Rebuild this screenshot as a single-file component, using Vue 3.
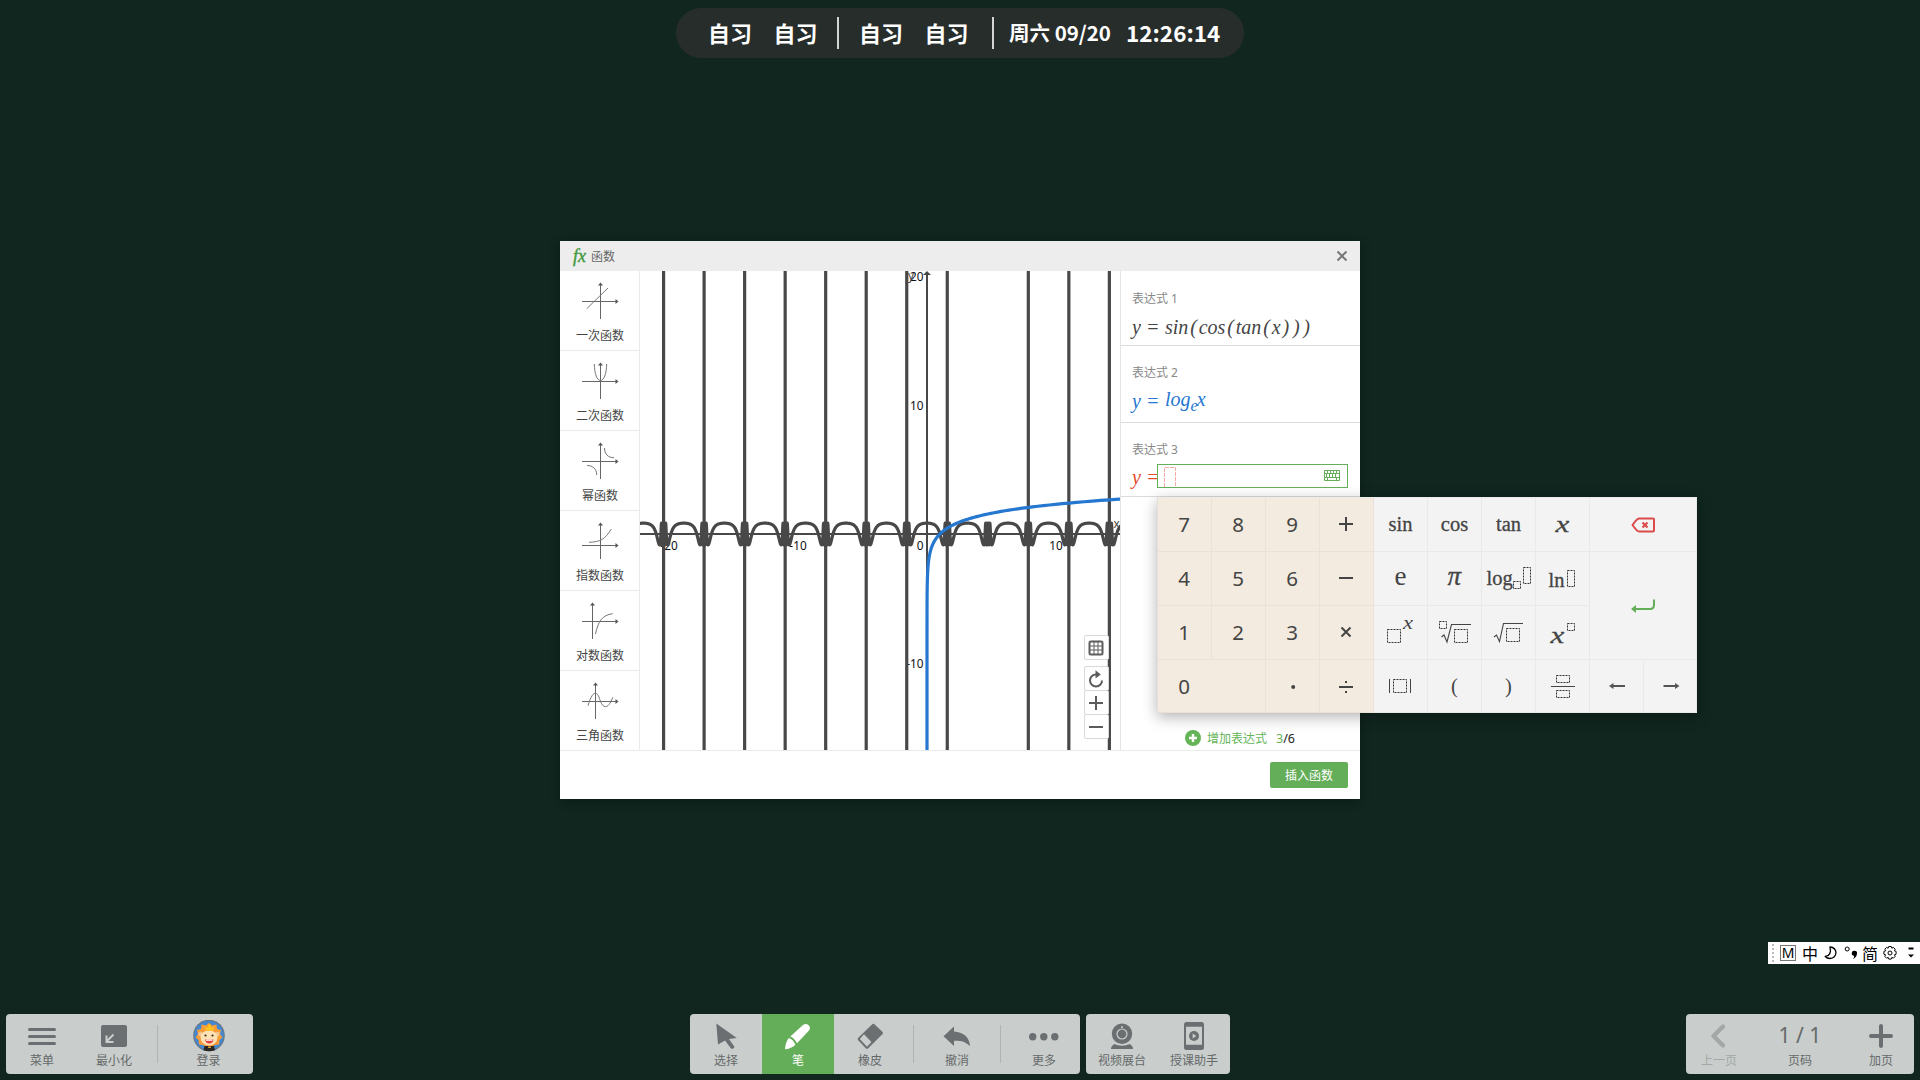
<script setup>
const U = 12.9
const OX = 287
const OY = 263

const asymptotes = []
for (let k = -7; k <= 4; k++) {
  if (k === 1) continue
  asymptotes.push(+(OX + U * (Math.PI / 2 + k * Math.PI)).toFixed(2))
}

function trigPath() {
  const pts = []
  for (let px = -2; px <= 482; px += 0.06) {
    const x = (px - OX) / U
    const y = Math.sin(Math.cos(Math.tan(x)))
    pts.push(`${px.toFixed(2)} ${(OY - y * U).toFixed(2)}`)
  }
  return 'M' + pts.join('L')
}

function logPath() {
  const pts = []
  for (let y = -17; y <= 2.8; y += 0.05) {
    pts.push(`${(OX + Math.exp(y) * U).toFixed(2)} ${(OY - y * U).toFixed(2)}`)
  }
  return 'M' + pts.join('L')
}

const trig = trigPath()
const log = logPath()

const kinds = [
  { name: '一次函数', ax: 18.5, ay: 18.5, d: 'M4.7 25.7L26 5' },
  { name: '二次函数', ax: 18.5, ay: 18.5, d: 'M12.3 1C12.6 11 15 17.5 18.5 17.5S24.4 11 24.7 1' },
  { name: '幂函数', ax: 18.5, ay: 18.5, d: 'M22.5 5C22.5 11 26 14.7 32 14.7M5 22.5C11 22.5 14.7 26 14.7 32' },
  { name: '指数函数', ax: 18.5, ay: 22.5, d: 'M7 19.3C18 19 23 16.5 29.3 6' },
  { name: '对数函数', ax: 10.5, ay: 18.5, d: 'M13.5 31C16 19 20 12 30.7 10.7' },
  { name: '三角函数', ax: 13.5, ay: 18.5, d: 'M6 22.7C9 13 11 10.3 13.5 10.3S17 14 18.5 18.5C20 22 21.5 23.7 23.5 23.7S28.5 21 30.7 14.3' }
]

const keys = [
  { t: '7', c: 'num' }, { t: '8', c: 'num' }, { t: '9', c: 'num' }, { g: 'plus', c: 'num' },
  { s: 'sin' }, { s: 'cos' }, { s: 'tan' }, { g: 'x' }, { g: 'back', c: 'wide' },
  { t: '4', c: 'num' }, { t: '5', c: 'num' }, { t: '6', c: 'num' }, { g: 'minus', c: 'num' },
  { g: 'e' }, { g: 'pi' }, { g: 'log' }, { g: 'ln' }, { g: 'enter', c: 'wide tall' },
  { t: '1', c: 'num' }, { t: '2', c: 'num' }, { t: '3', c: 'num' }, { g: 'times', c: 'num' },
  { g: 'powx' }, { g: 'nroot' }, { g: 'sqrt' }, { g: 'xpow' },
  { t: '0', c: 'num wide zero' }, { g: 'dot', c: 'num' }, { g: 'div', c: 'num' },
  { g: 'abs' }, { s: '(' }, { s: ')' }, { g: 'frac' }, { g: 'left' }, { g: 'right' }
]
</script>

<template>
  <div class="desktop">
    <header class="schedule">
      <span class="lesson">自习</span><span class="lesson">自习</span>
      <i class="bar"></i>
      <span class="lesson">自习</span><span class="lesson">自习</span>
      <i class="bar"></i>
      <span class="date">周六 09/20</span><span class="clock">12:26:14</span>
    </header>

    <section class="window">
      <div class="titlebar">
        <span class="fx">fx</span><span class="title">函数</span>
        <svg class="close" width="12" height="12"><path d="M1.5 1.5l9 9M10.5 1.5l-9 9" stroke="#777" stroke-width="2" /></svg>
      </div>
      <div class="body">
        <nav class="kinds">
          <div v-for="k in kinds" :key="k.name" class="kind">
            <svg width="37" height="37" fill="none">
              <g stroke="#666" stroke-width="1">
                <path :d="`M0 ${k.ay}H36M${k.ax} 0V36`" />
                <path :d="k.d" stroke="#777" />
              </g>
              <path :d="`M${k.ax} -.5l2.500 3h-5zM36.5 ${k.ay}l-3 2.500v-5z`" fill="#555" />
            </svg>
            <span>{{ k.name }}</span>
          </div>
        </nav>

        <div class="graph">
          <svg width="480" height="479" fill="none">
            <g class="ticks">
              <text x="29" y="279" text-anchor="middle">-20</text>
              <text x="158" y="279" text-anchor="middle">-10</text>
              <text x="416" y="279" text-anchor="middle">10</text>
              <text x="283.5" y="279" text-anchor="end">0</text>
              <text x="283.5" y="10" text-anchor="end">20</text>
              <text x="283.5" y="139" text-anchor="end">10</text>
              <text x="283.5" y="397" text-anchor="end">-10</text>
              <text x="268" y="9" class="axis">y</text>
              <text x="473.5" y="257" class="axis">x</text>
            </g>
            <path d="M0 263H480M287 2V479" stroke="#484848" stroke-width="2" />
            <path d="M287 0l4 4h-8z" fill="#484848" />
            <path v-for="a in asymptotes" :key="a" :d="`M${a} 0V479`" stroke="#484848" stroke-width="3.2" />
            <path :d="trig" stroke="#484848" stroke-width="3.200" stroke-linejoin="round" />
            <path :d="log" stroke="#2577d0" stroke-width="3.200" stroke-linejoin="round" />
          </svg>
          <div class="tools">
            <button>
              <svg width="16" height="16" fill="none" stroke="#5c5c5c">
                <rect x="1.5" y="1.5" width="13" height="13" rx="1.5" stroke-width="2" />
                <path d="M6 2v12M10 2v12M2 6h12M2 10h12" />
              </svg>
            </button>
            <div class="stack">
              <button>
                <svg width="16" height="18" fill="none">
                  <path d="M8 4.5A6 6 0 1 0 14 10.5" stroke="#5c5c5c" stroke-width="2" />
                  <path d="M7.5 .3L12.8 4.5L7.5 8.5z" fill="#5c5c5c" />
                </svg>
              </button>
              <button>
                <svg width="16" height="16" stroke="#5c5c5c" stroke-width="2"><path d="M1 8h14M8 1v14" /></svg>
              </button>
              <button>
                <svg width="16" height="16" stroke="#5c5c5c" stroke-width="2"><path d="M1 8h14" /></svg>
              </button>
            </div>
          </div>
        </div>

        <aside class="exprs">
          <div class="expr e1">
            <label>表达式 1</label>
            <div class="formula">
              <span class="lhs">y&nbsp;=</span>
              <span>sin</span><b>(</b><span>cos</span><b>(</b><span>tan</span><b>(</b><span>x</span><b>)</b><b>)</b><b>)</b>
            </div>
          </div>
          <div class="expr e2">
            <label>表达式 2</label>
            <div class="formula"><span class="lhs">y&nbsp;=</span><span class="log">log<sub>e</sub>x</span></div>
          </div>
          <div class="expr e3">
            <label>表达式 3</label>
            <div class="formula">
              <span class="lhs">y&nbsp;=</span>
              <div class="input">
                <svg class="slot" width="12" height="20" fill="none" stroke="#f3aaa4">
                  <path d="M.5 20V.5H11.5V20" stroke-dasharray="4 1" />
                </svg>
                <svg class="kbd" width="16" height="12" fill="none" stroke="#65ae59">
                  <path d="M.5 .5h15v10H.5zM.5 3.500h15M.5 7.500h15M3.500 .5v3M6.500 .5v3M9.500 .5v3M12.500 .5v3M2.500 3.500v4M5.500 3.500v4M8.500 3.500v4M11.500 3.500v4M3.500 7.500v3M12.500 7.500v3" />
                </svg>
              </div>
            </div>
          </div>
          <div class="add">
            <svg width="16" height="16"><circle cx="8" cy="8" r="8" fill="#65b558" /><path d="M4 8h8M8 4v8" stroke="#fff" stroke-width="2.4" /></svg>
            <span class="addtext">增加表达式</span><span class="count"><em>3</em>/6</span>
          </div>
        </aside>
      </div>
      <div class="footer"><button class="insert">插入函数</button></div>
    </section>

    <section class="keypad">
      <div v-for="(k, i) in keys" :key="i" class="key" :class="k.c">
        <span v-if="k.t" class="digit">{{ k.t }}</span>
        <span v-else-if="k.s" class="fn" :class="{ paren: k.s.length === 1 }">{{ k.s }}</span>
        <svg v-else :width="k.c && k.c.includes('wide') ? 107 : 53" :height="k.c && k.c.includes('tall') ? 107 : 53" fill="none" stroke="#444" class="glyph">
          <path v-if="k.g === 'plus'" d="M19 26h14M26 19v14" stroke-width="2" />
          <path v-else-if="k.g === 'minus'" d="M19 26h14" stroke-width="2" />
          <path v-else-if="k.g === 'times'" d="M21.5 21.5l9 9M30.5 21.5l-9 9" stroke-width="2" />
          <path v-else-if="k.g === 'div'" d="M19 27h14M25 22h2M25 32h2" stroke-width="2" />
          <circle v-else-if="k.g === 'dot'" cx="27.2" cy="27" r="2" fill="#444" stroke="none" />
          <text v-else-if="k.g === 'x'" transform="translate(19.5 34) scale(1.300 1)" font-size="24" class="it">x</text>
          <text v-else-if="k.g === 'e'" x="20.5" y="33" font-size="27" class="thin">e</text>
          <text v-else-if="k.g === 'pi'" x="19.5" y="33" font-size="27" class="it">π</text>
          <g v-else-if="k.g === 'log'">
            <text x="4.5" y="32.5" font-size="20.500">log</text>
            <path class="box" d="M31.5 29.5h7v7h-7zM41.5 15.5h7v16h-7z" />
          </g>
          <g v-else-if="k.g === 'ln'">
            <text x="12.5" y="35" font-size="20.500">ln</text>
            <path class="box" d="M31.5 18.5h7v16h-7z" />
          </g>
          <g v-else-if="k.g === 'powx'">
            <text transform="translate(29 22.5) scale(1.250 1)" font-size="18" class="it thin">x</text>
            <path class="box" d="M13.5 23.5h13v13h-13z" />
          </g>
          <g v-else-if="k.g === 'nroot'">
            <path d="M13.5 31l2.5-2l3 7l4.500-17.500h19.500" stroke-width="1.100" />
            <path class="box" d="M11.5 15.5h7v7h-7zM26.5 23.5h13v13h-13z" />
          </g>
          <g v-else-if="k.g === 'sqrt'">
            <path d="M12 31l2.500-2l3 6.500l4-18h19.500" stroke-width="1.100" />
            <path class="box" d="M24.5 22.5h13v13h-13z" />
          </g>
          <g v-else-if="k.g === 'xpow'">
            <text transform="translate(14.5 36.5) scale(1.300 1)" font-size="24" class="it">x</text>
            <path class="box" d="M31.5 17.5h7v7h-7z" />
          </g>
          <g v-else-if="k.g === 'abs'">
            <path d="M15.5 19v14M36.5 19v14" />
            <path class="box" d="M19.5 19.5h13v13h-13z" />
          </g>
          <g v-else-if="k.g === 'frac'">
            <path d="M15 26.5h24" />
            <path class="box" d="M20.5 15.5h13v7h-13zM20.5 30.5h13v7h-13z" />
          </g>
          <g v-else-if="k.g === 'back'" stroke="#dc4a4a">
            <path d="M49 20.5H63Q64 20.5 64 21.5V32.5Q64 33.5 63 33.5H49Q47 33.5 42.5 27Q47 20.5 49 20.5z" stroke-width="2" stroke-linejoin="round" />
            <path d="M52.5 24.5l5 5M57.5 24.5l-5 5" stroke-width="2.200" />
          </g>
          <g v-else-if="k.g === 'enter'" stroke="#65ae59">
            <path d="M64 47.5V53Q64 57 60 57H44" stroke-width="2" />
            <path d="M41 57l5-4v8z" fill="#65ae59" stroke="none" />
          </g>
          <g v-else-if="k.g === 'left'">
            <path d="M22 26H35" stroke="#555" stroke-width="2" /><path d="M19 26l4.500-3v6z" fill="#555" stroke="none" />
          </g>
          <g v-else-if="k.g === 'right'">
            <path d="M19.5 26H32" stroke="#555" stroke-width="2" /><path d="M35.5 26l-4.500-3v6z" fill="#555" stroke="none" />
          </g>
        </svg>
      </div>
    </section>

    <section class="ime">
      <svg width="5" height="20" class="grip"><path d="M2 1v19" stroke="#bbb" stroke-width="2" stroke-dasharray="2 2" /></svg>
      <span class="m">M</span>
      <span class="zh">中</span>
      <svg width="14" height="14" fill="none" stroke="#000" stroke-width="1.3"><path d="M6 1Q11.5 1.5 12 6.5Q11.5 12 6 12.5Q3 12.5 1.2 10.5Q8 9.5 6 1z" stroke-linejoin="round" /></svg>
      <svg width="14" height="14"><circle cx="3.2" cy="3" r="2" fill="none" stroke="#000" /><path d="M10.5 4.8a2.500 2.500 0 0 1 2.500 2.800Q12.800 11.500 9 13Q10.800 10.800 10 9.800A2.500 2.500 0 0 1 10.500 4.800z" /></svg>
      <span class="zh jian">简</span>
      <svg width="16" height="16" fill="none" stroke="#000">
        <circle cx="8" cy="8" r="2" />
        <path d="M6.8 1.5h2.400l.6 1.700 1.600-.8 1.800 1.800-.8 1.600 1.700.6v2.800l-1.700.6.8 1.600-1.800 1.800-1.600-.8-.6 1.700H6.800l-.6-1.700-1.600.8-1.800-1.800.8-1.600-1.700-.6V6.400l1.700-.6-.8-1.600 1.800-1.800 1.600.8z" stroke-linejoin="round" />
      </svg>
      <svg width="8" height="12" class="opts"><path d="M1.5 1.5h5" stroke="#000" stroke-width="2" /><path d="M1 7.5h6l-3 3z" /></svg>
    </section>

    <footer class="dock left">
      <div class="item">
        <svg width="32" height="32" stroke="#6b6f71" stroke-width="3" stroke-linecap="round"><path d="M3.5 9.5h25M3.5 16.5h25M3.5 23.5h25" /></svg>
        <span>菜单</span>
      </div>
      <div class="item">
        <svg width="32" height="32" fill="none">
          <rect x="3" y="5" width="26" height="22" rx="2" fill="#6b6f71" />
          <path d="M15.5 14.5l-7 7M8.500 15.500v6.500h7" stroke="#c9cecc" stroke-width="2" />
        </svg>
        <span>最小化</span>
      </div>
      <i class="split"></i>
      <div class="item login">
        <svg width="32" height="32">
          <circle cx="16" cy="15.5" r="15.8" fill="#66788a" />
          <circle cx="16" cy="15.5" r="14.6" fill="#4388d2" />
          <path d="M16 3l3 2.500l4.500-1l.5 4.500l4 1l-1 4l2.500 3.500l-3 2.500l-.5 4.500l-4 .5l-6 3l-6-3l-4-.5l-.5-4.500l-3-2.500l2.500-3.500l-1-4l4-1l.5-4.500l4.500 1z" fill="#f79c36" />
          <circle cx="7.5" cy="14" r="2.3" fill="#f6c391" /><circle cx="24.5" cy="14" r="2.3" fill="#f6c391" />
          <path d="M7.5 17Q8 11 16 10.5Q24 11 24.5 17Q24 25 16 25.5Q8 25 7.5 17z" fill="#fde0b4" />
          <path d="M12.5 10.500V6l2 2l2-5l2 5l2-2v4.500z" fill="#ffc31f" />
          <circle cx="12.5" cy="15.5" r="1.1" fill="#3a2a22" /><circle cx="19.5" cy="15.5" r="1.1" fill="#3a2a22" />
          <path d="M12 19.5h8.500q-.5 4-4.200 4t-4.300-4z" fill="#e0433c" />
          <path d="M13 19.5h6.500v1.200H13z" fill="#fff" />
          <path d="M11.5 26h9.500l1 4.300q-6 2-11.500 0z" fill="#2b2623" />
          <path d="M15 26.5h3v1.500h-3z" fill="#d99a2b" />
        </svg>
        <span>登录</span>
      </div>
    </footer>

    <footer class="dock middle">
      <div class="item">
        <svg width="32" height="32" fill="#6b6f71"><path d="M6.3 3.500L26.800 18L19 19L24.300 26.500Q24.500 28 23 28.700Q21.500 29.200 20.800 28.200L15 20.500L8 24.500z" /></svg>
        <span>选择</span>
      </div>
      <div class="item active">
        <svg width="32" height="32" fill="#fff">
          <path d="M8.3 16.5L21 5Q23.5 2.800 26.500 5Q29.200 8 27 10.500L15 23.300Q12.500 18 8.300 16.500z" />
          <path d="M6.8 18Q11.5 19.5 13.300 25Q8.500 29 3 29.300Q3.500 22 6.800 18z" />
        </svg>
        <span>笔</span>
      </div>
      <div class="item">
        <svg width="32" height="32">
          <path d="M18.5 4Q19.3 3.300 20.200 4L28.600 12Q29.300 13 28.600 14L14 28.500Q13 29.300 12 28.500L4 20Q3.300 19 4 18z" fill="#6b6f71" />
          <path d="M10 14.3L5.800 19L13 26.800L17.400 22z" fill="#c9cecc" />
        </svg>
        <span>橡皮</span>
      </div>
      <i class="split"></i>
      <div class="item">
        <svg width="32" height="32" fill="#6b6f71"><path d="M2.5 16.300L13 6.500V11.500C22 12 28.500 17 29 26C24 21.500 20 20.500 13 20.700V26z" /></svg>
        <span>撤消</span>
      </div>
      <i class="split"></i>
      <div class="item">
        <svg width="32" height="32" fill="#6b6f71"><circle cx="4.7" cy="16.7" r="3.7" /><circle cx="15.8" cy="16.7" r="3.7" /><circle cx="26.8" cy="16.7" r="3.7" /></svg>
        <span>更多</span>
      </div>
    </footer>

    <footer class="dock extra">
      <div class="item">
        <svg width="32" height="32" fill="none">
          <circle cx="16" cy="13.8" r="10.2" fill="#6b6f71" />
          <circle cx="16" cy="14" r="5" stroke="#c9cecc" stroke-width="1.2" />
          <circle cx="16" cy="7" r="1" fill="#c9cecc" />
          <path d="M8 24Q16 27.500 24 24Q27 26.500 27 29H5Q5 26.500 8 24z" fill="#6b6f71" />
        </svg>
        <span>视频展台</span>
      </div>
      <div class="item">
        <svg width="32" height="32">
          <rect x="6" y="2" width="20" height="28" rx="2.5" fill="#6b6f71" />
          <path d="M8 6.8h16v18H8z" fill="#c9cecc" />
          <circle cx="16" cy="16" r="5" fill="#6b6f71" />
          <path d="M14.6 13.5v5l3.700-2.500z" fill="#c9cecc" />
        </svg>
        <span>授课助手</span>
      </div>
    </footer>

    <footer class="dock pager">
      <div class="item off">
        <svg width="32" height="32" fill="none" stroke="#a3a8a7" stroke-width="4.4" stroke-linecap="round" stroke-linejoin="round"><path d="M20 6.5L10.500 16L20 25.500" /></svg>
        <span>上一页</span>
      </div>
      <div class="item page">
        <div class="num-of">1 / 1</div>
        <span>页码</span>
      </div>
      <div class="item">
        <svg width="32" height="32" stroke="#6b6f71" stroke-width="4" stroke-linecap="round"><path d="M6 16h20M16 6v20" /></svg>
        <span>加页</span>
      </div>
    </footer>
  </div>
</template>

<style>
body {
  margin: 0;
  overflow: hidden;
}
</style>

<style scoped>
.desktop {
  position: relative;
  width: 1920px;
  height: 1080px;
  overflow: hidden;
  background: #10261f;
  font-family: "Noto Sans", "Noto Sans CJK SC", sans-serif;
  font-size: 12px;
}
.desktop * {
  box-sizing: border-box;
}
svg {
  display: block;
  flex: none;
}
button {
  display: flex;
  align-items: center;
  justify-content: center;
  padding: 0;
  font: inherit;
}

.schedule {
  position: absolute;
  left: 676px;
  top: 8px;
  width: 568px;
  height: 50px;
  padding: 0 0 2px 32px;
  display: flex;
  align-items: center;
  border-radius: 25px;
  background: #272d2b;
  color: #fff;
  font-family: "Noto Sans CJK SC", sans-serif;
  font-weight: 700;
  white-space: nowrap;
}
.lesson {
  width: 44px;
  margin-right: 21.5px;
  font-size: 22px;
}
.bar {
  position: relative;
  top: 1px;
  width: 2px;
  height: 32px;
  margin: 0 20px 0 -2px;
  background: #d4d5d5;
}
.bar ~ .bar {
  margin: 0 15px 0 2px;
}
.date {
  width: 117px;
  font-size: 20.5px;
}
.clock {
  font-size: 22.5px;
}

.window {
  position: absolute;
  left: 560px;
  top: 241px;
  width: 800px;
  height: 558px;
  display: flex;
  flex-direction: column;
  background: #fff;
  box-shadow: 0 2px 10px rgba(0, 0, 0, 0.3);
}
.titlebar {
  height: 30px;
  display: flex;
  align-items: center;
  padding: 0 12px 0 13px;
  background: #ededed;
}
.fx {
  width: 18px;
  color: #3f9a3b;
  font: italic 18px/20px "Liberation Serif", serif;
  -webkit-text-stroke: 0.4px #3f9a3b;
}
.title {
  color: #666;
}
.close {
  margin-left: auto;
}
.body {
  height: 479px;
  display: flex;
}
.kinds {
  width: 80px;
  border-right: 1px solid #eaeaea;
}
.kind {
  height: 80px;
  padding-top: 12px;
  display: flex;
  flex-direction: column;
  align-items: center;
  border-bottom: 1px solid #eaeaea;
  color: #444;
}
.kind:last-child {
  border-bottom: 0;
}
.kind svg {
  margin-left: 2px;
  overflow: visible;
}
.kind span {
  margin: 7px 0 0 1px;
  line-height: 18px;
}
.graph {
  position: relative;
  width: 480px;
  overflow: hidden;
}
.ticks text {
  fill: #111;
  font-size: 11.8px;
}
.ticks .axis {
  fill: #444;
}
.tools {
  position: absolute;
  right: 11px;
  top: 364px;
  width: 25px;
  display: flex;
  flex-direction: column;
  gap: 6px;
}
.tools button {
  width: 25px;
  height: 25px;
  padding-right: 1px;
  border: 1px solid #d9d9d9;
  border-radius: 2px;
  background: #fff;
}
.stack button + button {
  margin-top: -1px;
}
.exprs {
  width: 240px;
  display: flex;
  flex-direction: column;
  border-left: 1px solid #e4e4e4;
}
.expr {
  padding-left: 11px;
  border-bottom: 1px solid #dcdcdc;
}
.expr label {
  display: block;
  padding-top: 19px;
  line-height: 18px;
  color: #888;
}
.expr.e2 label,
.expr.e3 label {
  padding-top: 18px;
}
.e1 {
  height: 75px;
  color: #444;
}
.e2 {
  height: 77px;
  color: #2577d0;
}
.e3 {
  height: 74px;
  color: #e8492f;
}
.formula {
  height: 24px;
  margin-top: 7px;
  display: flex;
  font: italic 20px/24px "Liberation Serif", serif;
  white-space: nowrap;
}
.lhs {
  width: 33px;
  flex: none;
}
.formula b {
  width: 10.4px;
  font-weight: 400;
  text-align: center;
}
.e2 .log {
  margin-top: -2px;
}
.e2 sub {
  font-size: 16px;
  line-height: 0;
  vertical-align: -5px;
  margin-right: -1px;
}
.e3 .lhs {
  width: 25px;
  margin-top: -1px;
}
.input {
  width: 191px;
  height: 24px;
  margin-top: -2px;
  display: flex;
  align-items: flex-end;
  justify-content: space-between;
  padding: 0 7px 0 6px;
  border: 1px solid #65ae59;
}
.kbd {
  margin-bottom: 5px;
}
.add {
  height: 30px;
  margin-top: auto;
  padding: 6px 0 0 64px;
  display: flex;
  align-items: center;
}
.addtext {
  margin-left: 6px;
  color: #65b558;
}
.count {
  margin-left: 9px;
  color: #222;
  font-size: 12.5px;
}
.count em {
  font-style: normal;
  color: #65b558;
}
.footer {
  flex: 1;
  display: flex;
  justify-content: flex-end;
  padding: 11px 12px 0 0;
  border-top: 1px solid #eaeaea;
}
.insert {
  width: 78px;
  height: 26px;
  border: 0;
  border-radius: 2px;
  background: #65ae59;
  color: #fff;
}

.keypad {
  position: absolute;
  left: 1157px;
  top: 497px;
  width: 540px;
  height: 216px;
  display: grid;
  grid-template-columns: repeat(9, 54px) 53px;
  grid-template-rows: repeat(3, 54px) 53px;
  border-left: 1px solid #e5dfd7;
  border-top: 1px solid #efebe6;
  background: #f3f3f3;
  box-shadow: 0 4px 14px rgba(0, 0, 0, 0.3);
}
.key {
  border-right: 1px solid #e9e9e9;
  border-bottom: 1px solid #e9e9e9;
  color: #444;
  text-align: center;
  overflow: hidden;
}
.key.num {
  background: #f3ebe0;
  border-color: #eae2d8;
}
.wide {
  grid-column: span 2;
}
.tall {
  grid-row: span 2;
}
.digit {
  display: block;
  width: 52px;
  font-size: 20.5px;
  line-height: 52px;
}
.fn {
  display: block;
  font: 20.5px/53px "Liberation Serif", serif;
  -webkit-text-stroke: 0.3px #444;
}
.fn.paren {
  -webkit-text-stroke: 0;
}
.glyph text {
  fill: #444;
  stroke-width: 0.3px;
  font-family: "Liberation Serif", serif;
}
.glyph .it {
  font-style: italic;
}
.glyph .thin {
  stroke: none;
}
.box {
  stroke: #333;
  stroke-dasharray: 2 1;
}

.ime {
  position: absolute;
  left: 1768px;
  top: 942px;
  width: 152px;
  height: 22px;
  display: flex;
  align-items: center;
  padding-left: 3px;
  background: #fff;
  color: #000;
}
.grip {
  margin-right: 4px;
}
.m {
  width: 16px;
  height: 16px;
  margin-right: 6px;
  border: 1px solid #777;
  font-size: 14px;
  line-height: 14px;
  text-align: center;
}
.zh {
  width: 16px;
  margin-right: 6px;
  font: 16px/20px "Noto Sans CJK SC", sans-serif;
}
.ime svg + svg {
  margin-left: 6px;
}
.jian {
  margin: 0 4px 0 4px;
}
.ime .opts {
  margin-left: 9px;
}

.dock {
  position: absolute;
  top: 1014px;
  height: 60px;
  display: flex;
  align-items: center;
  border-radius: 4px;
  background: #c9cecc;
  overflow: hidden;
  color: #66696a;
}
.dock.left {
  left: 6px;
  width: 247px;
}
.dock.middle {
  left: 690px;
  width: 390px;
}
.dock.extra {
  left: 1086px;
  width: 144px;
}
.dock.pager {
  left: 1686px;
  width: 228px;
}
.item {
  width: 72px;
  height: 60px;
  padding-top: 6px;
  display: flex;
  flex-direction: column;
  align-items: center;
  white-space: nowrap;
}
.item span {
  line-height: 17px;
}
.login {
  width: 87px;
}
.active {
  background: #65ae59;
  color: #fff;
}
.split {
  width: 1px;
  height: 38px;
  margin: 0 7px;
  background: #b0b5b3;
}
.pager .item {
  width: 66px;
}
.pager .page {
  width: 96px;
}
.pager .off {
  color: #a3a8a7;
}
.num-of {
  height: 32px;
  font-size: 21px;
  line-height: 31px;
}
</style>
